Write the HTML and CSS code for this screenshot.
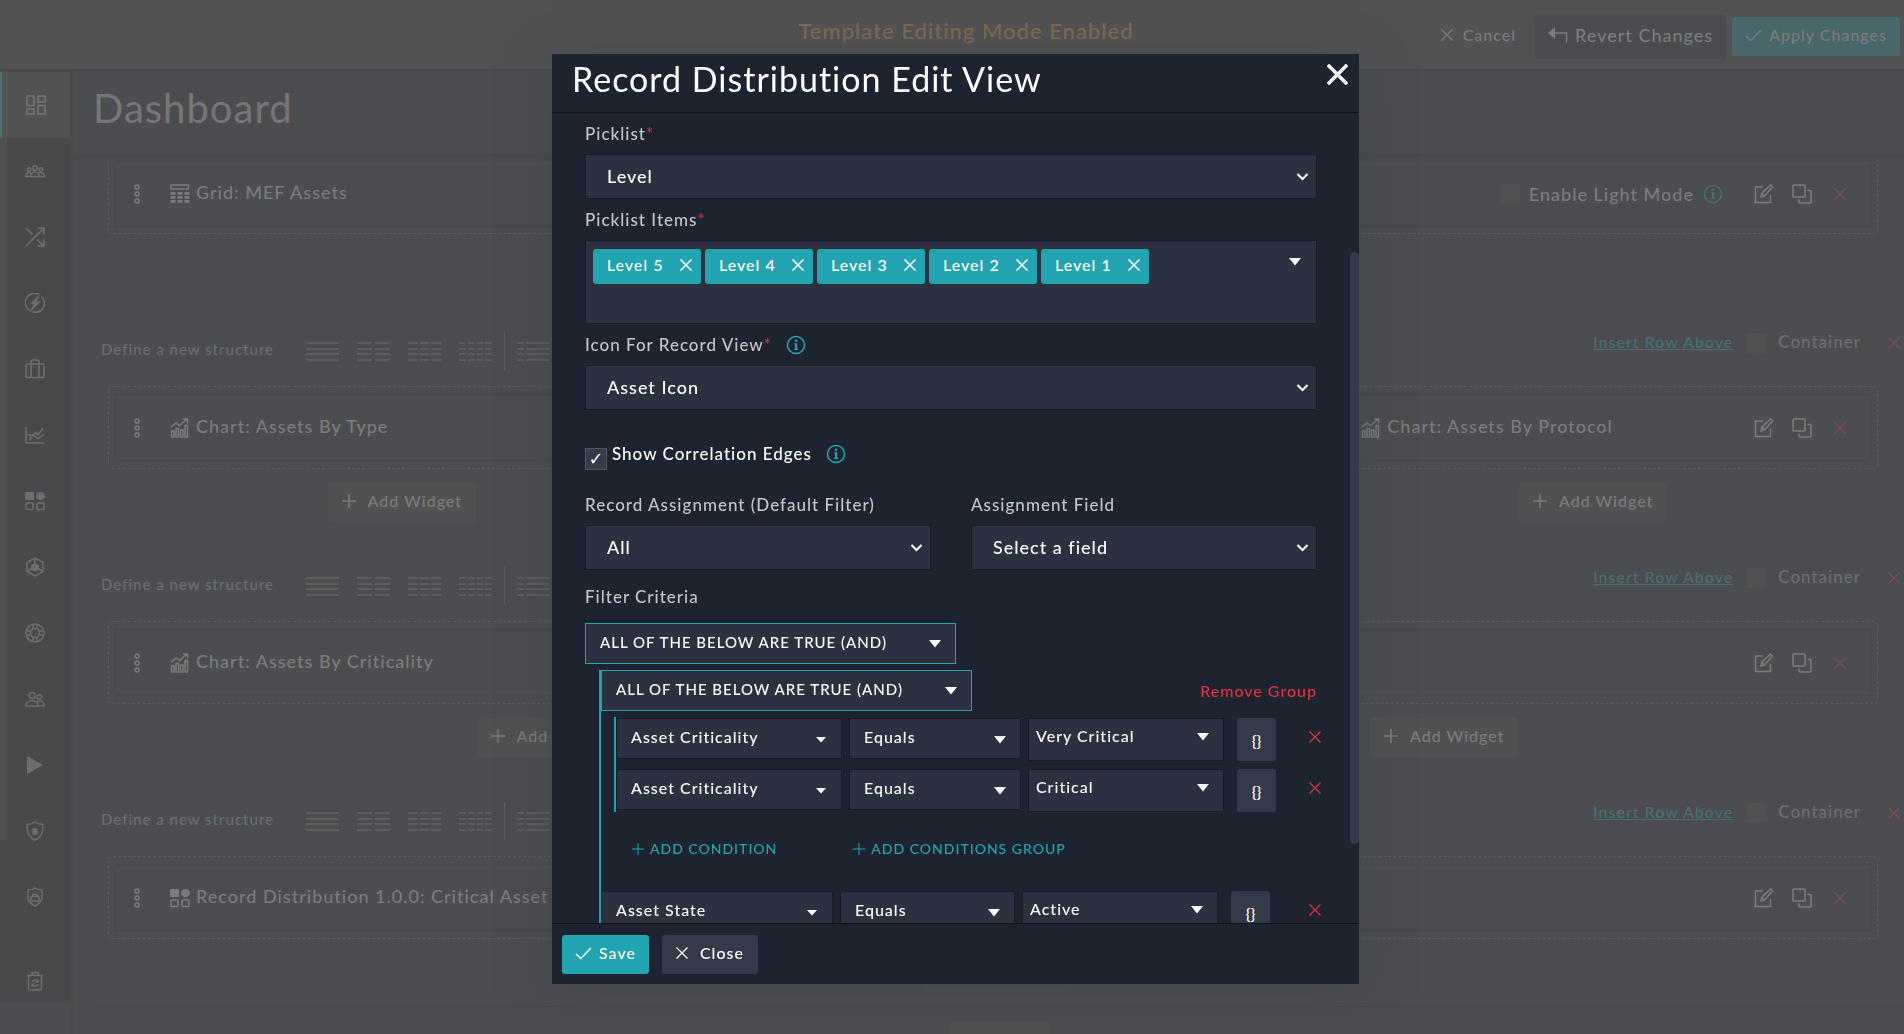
FILE: index.html
```html
<!DOCTYPE html>
<html lang="en">
<head>
<meta charset="utf-8">
<title>Dashboard</title>
<link rel="stylesheet" href="styles.css">
</head>
<body>
<svg class="sprite" aria-hidden="true">
  <symbol id="i-x" viewBox="0 0 12 12"><path d="M.500 .500l11 11M11.500 .500l-11 11"/></symbol>
  <symbol id="i-plus" viewBox="0 0 14 14"><path d="M7 0v14M0 7h14"/></symbol>
  <symbol id="i-check" viewBox="0 0 18 14"><path d="M1 7.500l5 5L17 1"/></symbol>
  <symbol id="i-undo" viewBox="0 0 20 16"><path d="M3 6h15.500v9.500"/><path class="fill" d="M7 0v12L0 6z"/></symbol>
  <symbol id="i-info" viewBox="0 0 20 20"><circle cx="10" cy="10" r="8.500"/><path class="fill" d="M8 8.300h3.200v5.700h1.200v1H7.700v-1h1.300V9.300H8z"/><circle class="fill" cx="10" cy="5.700" r="1.300"/></symbol>
  <symbol id="i-chev" viewBox="0 0 12 8"><path d="M1 1l5 5 5-5"/></symbol>
  <symbol id="i-caret" viewBox="0 0 12 8"><path class="fill" d="M0 0h12L6 7.500z"/></symbol>
  <symbol id="i-caret-s" viewBox="0 0 12 8"><path class="fill" d="M1 1h10L6 6.500z"/></symbol>
  <symbol id="i-edit" viewBox="0 0 20 20"><path d="M9 3H1.500v15.500h15V11M7 13l1-4 8.500-8 2 2L10.500 12z M8 9l2.500 3"/></symbol>
  <symbol id="i-copy" viewBox="0 0 20 20"><rect x="1" y="1" width="12" height="12" rx="1"/><path d="M15.500 6.500H18q1 0 1 1V18q0 1-1 1H8q-1 0-1-1v-2.500"/></symbol>
  <symbol id="i-drag" viewBox="0 0 6 20"><circle cx="3" cy="3" r="2"/><circle cx="3" cy="10" r="2"/><circle cx="3" cy="17" r="2"/></symbol>
  <symbol id="i-grid" viewBox="0 0 20 20"><rect x="1" y="1" width="17.500" height="4"/><path class="fill" d="M.500 8h5v2.800h-5zM7.500 8h5v2.800h-5zM14.500 8h5v2.800h-5zM.500 12h5v2.800h-5zM7.500 12h5v2.800h-5zM14.500 12h5v2.800h-5zM.500 16h5v2.800h-5zM7.500 16h5v2.800h-5zM14.500 16h5v2.800h-5z"/></symbol>
  <symbol id="i-chart" viewBox="0 0 20 20"><path d="M1 9l5-4 3.500 2.500L17 1M13 1h4.500v4.500M1.500 19v-6h2.500v6zM6 19v-8.500h2.500V19zM10.500 19v-7H13v7zM15 19V7.500h2.500V19z"/></symbol>
  <symbol id="i-dist" viewBox="0 0 20 20"><rect class="fill" x="0" y="1" width="9" height="8" rx="1"/><ellipse class="fill" cx="15.500" cy="5" rx="4.500" ry="4"/><rect x="1" y="12" width="7" height="6.500" rx="1"/><rect x="12" y="12" width="7" height="6.500" rx="1"/></symbol>
  <symbol id="i-dash" viewBox="0 0 20 20"><rect x="1" y="1" width="7" height="9.500"/><rect x="12" y="1" width="7" height="6"/><rect x="1" y="14" width="7" height="5"/><rect x="12" y="10.500" width="7" height="8.500"/></symbol>
  <symbol id="i-team" viewBox="0 0 20 20"><circle cx="10" cy="7" r="2.300"/><circle cx="4" cy="8.500" r="1.700"/><circle cx="16" cy="8.500" r="1.700"/><path d="M5.500 15.500c0-6 9-6 9 0zM5 15.500H.700c0-3.500 2-4.500 5-3.700M15 15.500h4.300c0-3.500-2-4.500-5-3.700"/></symbol>
  <symbol id="i-shuffle" viewBox="0 0 20 20"><path d="M1 19L19 1M12.500 1H19v6.500M1 1l6.500 6.500M12 12.500l6.500 6.500M12.500 19H19v-6.500"/></symbol>
  <symbol id="i-bolt" viewBox="0 0 20 20"><path d="M13.500 1.500A9 9 0 0 0 5 17.500M16.500 3.500A9 9 0 0 1 7.500 18.700"/><path class="fill" d="M16 0L5 11h4L4 20 15.500 8.500h-4z"/></symbol>
  <symbol id="i-case" viewBox="0 0 20 20"><rect x="1" y="5" width="18" height="13.500" rx="1"/><path d="M6 18V3q0-2 2-2h4q2 0 2 2v15"/></symbol>
  <symbol id="i-line" viewBox="0 0 20 20"><path d="M1 2v16h18.500M1 10h7l5 3.500 6-4M4.500 15.500l3-5 3.500-3 2 2.500L18 3"/></symbol>
  <symbol id="i-hex" viewBox="0 0 20 20"><path d="M10 1l8 4.500v9L10 19l-8-4.500v-9zM10 1v9M2 14.500l7-4M18 14.500l-7-4"/><path class="fill" d="M10 6l4 2.500v4.500l-4 1.500-4-1.500V8.500z"/></symbol>
  <symbol id="i-life" viewBox="0 0 20 20"><circle cx="10" cy="10" r="9"/><circle cx="10" cy="10" r="4.500"/><path d="M8 1.500v4.500M12 1.500v4.500M8 14v4.500M12 14v4.500M1.500 8H6M1.500 12H6M14 8h4.500M14 12h4.500"/></symbol>
  <symbol id="i-users" viewBox="0 0 20 20"><circle cx="7" cy="6.500" r="3"/><circle cx="14.500" cy="8" r="2.300"/><path d="M.800 17c0-7 12.500-7 12.500 0zM12 12.700c4-1.500 7.200 0 7.200 4.300h-6"/></symbol>
  <symbol id="i-play" viewBox="0 0 20 20"><path class="fill" d="M2 1l16 9-16 9z"/></symbol>
  <symbol id="i-shield" viewBox="0 0 20 20"><path d="M10 1c3 2 5 2.500 8 2.500 0 7-1 12.500-8 15.500-7-3-8-8.500-8-15.500 3 0 5-.500 8-2.500z"/><ellipse class="fill" cx="10" cy="10.500" rx="2.300" ry="3.500"/><path stroke-width="1" d="M7 8.500h6M6.500 11h7M7 13h6"/></symbol>
  <symbol id="i-lock" viewBox="0 0 20 20"><path d="M10 1c2 1.500 4.500 2 7 2v7c0 4-3 7-7 9-4-2-7-5-7-9V3c2.500 0 5-.500 7-2z"/><rect x="6" y="9.500" width="8" height="4.500" rx="1"/><path d="M8 9.500V7.500h4v2"/></symbol>
  <symbol id="i-trash" viewBox="0 0 20 20"><path d="M2 4.500h16M7 4V1.500h6V4M3.500 5v12q0 2 2 2h9q2 0 2-2V5M7 11c1-3 5-3 6 0M13 13c-1 3-5 3-6 0M13 8.500v2.500h-2.500M7 15.500V13h2.500"/></symbol>
  <symbol id="s-1" viewBox="0 0 33 20"><path d="M0 2h33M0 8h33M0 13h33M0 19h33"/></symbol>
  <symbol id="s-2" viewBox="0 0 33 20"><path d="M0 2h15M18 2h15M0 8h15M18 8h15M0 13h15M18 13h15M0 19h15M18 19h15"/></symbol>
  <symbol id="s-3" viewBox="0 0 33 20"><path stroke-dasharray="10 1.500" d="M0 2h33M0 8h33M0 13h33M0 19h33"/></symbol>
  <symbol id="s-4" viewBox="0 0 33 20"><path stroke-dasharray="7 1.700" d="M0 2h33M0 8h33M0 13h33M0 19h33"/></symbol>
  <symbol id="s-5" viewBox="0 0 33 20"><path d="M0 2h7M9 2h24M0 8h7M9 8h24M0 13h7M9 13h24M0 19h7M9 19h24"/></symbol>
</svg>

<div class="app">
  <header class="topbar">
    <span class="topbar-side"></span>
    <strong class="mode">Template Editing Mode Enabled</strong>
    <div class="topbar-side actions">
      <button class="btn ghost"><svg class="ic s12"><use href="#i-x"/></svg>Cancel</button>
      <button class="btn revert"><svg class="ic undo"><use href="#i-undo"/></svg>Revert Changes</button>
      <button class="btn apply"><svg class="ic check"><use href="#i-check"/></svg>Apply Changes</button>
    </div>
  </header>

  <div class="shell">
    <nav class="sidebar" aria-label="Main">
      <a class="nav active" href="#" aria-label="Dashboard"><svg class="ic s20"><use href="#i-dash"/></svg></a>
      <a class="nav" href="#" aria-label="Teams"><svg class="ic s20"><use href="#i-team"/></svg></a>
      <a class="nav" href="#" aria-label="Workflows"><svg class="ic s20"><use href="#i-shuffle"/></svg></a>
      <a class="nav" href="#" aria-label="Automation"><svg class="ic s20"><use href="#i-bolt"/></svg></a>
      <a class="nav" href="#" aria-label="Cases"><svg class="ic s20"><use href="#i-case"/></svg></a>
      <a class="nav" href="#" aria-label="Reports"><svg class="ic s20"><use href="#i-line"/></svg></a>
      <a class="nav" href="#" aria-label="Widgets"><svg class="ic s20"><use href="#i-dist"/></svg></a>
      <a class="nav" href="#" aria-label="Resources"><svg class="ic s20"><use href="#i-hex"/></svg></a>
      <a class="nav" href="#" aria-label="Support"><svg class="ic s20"><use href="#i-life"/></svg></a>
      <a class="nav" href="#" aria-label="Users"><svg class="ic s20"><use href="#i-users"/></svg></a>
      <a class="nav" href="#" aria-label="Playbooks"><svg class="ic s20"><use href="#i-play"/></svg></a>
      <a class="nav" href="#" aria-label="Threats"><svg class="ic s20"><use href="#i-shield"/></svg></a>
      <a class="nav" href="#" aria-label="Security"><svg class="ic s20"><use href="#i-lock"/></svg></a>
      <a class="nav bin" href="#" aria-label="Recycle bin"><svg class="ic s20"><use href="#i-trash"/></svg></a>
    </nav>

    <main class="main">
      <h1 class="page-title">Dashboard</h1>
      <div class="canvas">
        <section class="columns">
          <div class="column">
            <div class="drop first"><article class="widget">
              <svg class="ic drag"><use href="#i-drag"/></svg><svg class="ic s20"><use href="#i-grid"/></svg><span class="name">Grid: MEF Assets</span>
              <label class="light"><input type="checkbox" class="tick">Enable Light Mode<svg class="ic s20 teal"><use href="#i-info"/></svg></label>
              <button class="tool" aria-label="Edit"><svg class="ic s20"><use href="#i-edit"/></svg></button><button class="tool" aria-label="Copy"><svg class="ic s20"><use href="#i-copy"/></svg></button><button class="tool red" aria-label="Remove"><svg class="ic s12"><use href="#i-x"/></svg></button>
            </article></div>
            <button class="btn add"><svg class="ic s14"><use href="#i-plus"/></svg>Add Widget</button>
          </div>
        </section>

        <div class="bar">
          <div class="structure"><span>Define a new structure</span><svg class="ic lay"><use href="#s-1"/></svg><svg class="ic lay"><use href="#s-2"/></svg><svg class="ic lay"><use href="#s-3"/></svg><svg class="ic lay"><use href="#s-4"/></svg><i class="rule"></i><svg class="ic lay"><use href="#s-5"/></svg></div>
          <div class="row-tools"><a href="#">Insert Row Above</a><label class="container"><input type="checkbox" class="tick"><span>Container</span></label><button class="tool red" aria-label="Remove row"><svg class="ic s12"><use href="#i-x"/></svg></button></div>
        </div>
        <section class="columns">
          <div class="column">
            <div class="drop"><article class="widget">
              <svg class="ic drag"><use href="#i-drag"/></svg><svg class="ic s20"><use href="#i-chart"/></svg><span class="name">Chart: Assets By Type</span>
            </article></div>
            <button class="btn add"><svg class="ic s14"><use href="#i-plus"/></svg>Add Widget</button>
          </div>
          <div class="column">
            <div class="drop"><article class="widget"></article></div>
            <button class="btn add"><svg class="ic s14"><use href="#i-plus"/></svg>Add Widget</button>
          </div>
          <div class="column">
            <div class="drop"><article class="widget">
              <svg class="ic drag"><use href="#i-drag"/></svg><svg class="ic s20"><use href="#i-chart"/></svg><span class="name">Chart: Assets By Protocol</span>
              <button class="tool" aria-label="Edit"><svg class="ic s20"><use href="#i-edit"/></svg></button><button class="tool" aria-label="Copy"><svg class="ic s20"><use href="#i-copy"/></svg></button><button class="tool red" aria-label="Remove"><svg class="ic s12"><use href="#i-x"/></svg></button>
            </article></div>
            <button class="btn add"><svg class="ic s14"><use href="#i-plus"/></svg>Add Widget</button>
          </div>
        </section>

        <div class="bar">
          <div class="structure"><span>Define a new structure</span><svg class="ic lay"><use href="#s-1"/></svg><svg class="ic lay"><use href="#s-2"/></svg><svg class="ic lay"><use href="#s-3"/></svg><svg class="ic lay"><use href="#s-4"/></svg><i class="rule"></i><svg class="ic lay"><use href="#s-5"/></svg></div>
          <div class="row-tools"><a href="#">Insert Row Above</a><label class="container"><input type="checkbox" class="tick"><span>Container</span></label><button class="tool red" aria-label="Remove row"><svg class="ic s12"><use href="#i-x"/></svg></button></div>
        </div>
        <section class="columns">
          <div class="column">
            <div class="drop"><article class="widget">
              <svg class="ic drag"><use href="#i-drag"/></svg><svg class="ic s20"><use href="#i-chart"/></svg><span class="name">Chart: Assets By Criticality</span>
            </article></div>
            <button class="btn add"><svg class="ic s14"><use href="#i-plus"/></svg>Add Widget</button>
          </div>
          <div class="column">
            <div class="drop"><article class="widget">
              <span class="name"></span>
              <button class="tool" aria-label="Edit"><svg class="ic s20"><use href="#i-edit"/></svg></button><button class="tool" aria-label="Copy"><svg class="ic s20"><use href="#i-copy"/></svg></button><button class="tool red" aria-label="Remove"><svg class="ic s12"><use href="#i-x"/></svg></button>
            </article></div>
            <button class="btn add"><svg class="ic s14"><use href="#i-plus"/></svg>Add Widget</button>
          </div>
        </section>

        <div class="bar">
          <div class="structure"><span>Define a new structure</span><svg class="ic lay"><use href="#s-1"/></svg><svg class="ic lay"><use href="#s-2"/></svg><svg class="ic lay"><use href="#s-3"/></svg><svg class="ic lay"><use href="#s-4"/></svg><i class="rule"></i><svg class="ic lay"><use href="#s-5"/></svg></div>
          <div class="row-tools"><a href="#">Insert Row Above</a><label class="container"><input type="checkbox" class="tick"><span>Container</span></label><button class="tool red" aria-label="Remove row"><svg class="ic s12"><use href="#i-x"/></svg></button></div>
        </div>
        <section class="columns">
          <div class="column">
            <div class="drop"><article class="widget">
              <svg class="ic drag"><use href="#i-drag"/></svg><svg class="ic s20"><use href="#i-dist"/></svg><span class="name">Record Distribution 1.0.0: Critical Asset Distribution</span>
              <button class="tool" aria-label="Edit"><svg class="ic s20"><use href="#i-edit"/></svg></button><button class="tool" aria-label="Copy"><svg class="ic s20"><use href="#i-copy"/></svg></button><button class="tool red" aria-label="Remove"><svg class="ic s12"><use href="#i-x"/></svg></button>
            </article></div>
            <button class="btn add"><svg class="ic s14"><use href="#i-plus"/></svg>Add Widget</button>
          </div>
        </section>
        <div class="add-row"><button class="btn add">Add Row</button></div>
      </div>
    </main>
  </div>
</div>

<div class="overlay">
  <form class="modal" role="dialog" aria-labelledby="modal-title">
    <header class="modal-head">
      <h2 id="modal-title">Record Distribution Edit View</h2>
      <button type="button" class="close" aria-label="Close"><svg class="ic"><use href="#i-x"/></svg></button>
    </header>

    <div class="modal-body">
      <div class="fields">
        <label class="label" for="picklist">Picklist<b>*</b></label>
        <div class="select"><select id="picklist"><option>Level</option></select><svg class="ic chev"><use href="#i-chev"/></svg></div>

        <span class="label" id="items-label">Picklist Items<b>*</b></span>
        <div class="multi" role="group" aria-labelledby="items-label">
          <span class="tag">Level 5<button type="button" aria-label="Remove Level 5"><svg class="ic s12"><use href="#i-x"/></svg></button></span>
          <span class="tag">Level 4<button type="button" aria-label="Remove Level 4"><svg class="ic s12"><use href="#i-x"/></svg></button></span>
          <span class="tag">Level 3<button type="button" aria-label="Remove Level 3"><svg class="ic s12"><use href="#i-x"/></svg></button></span>
          <span class="tag">Level 2<button type="button" aria-label="Remove Level 2"><svg class="ic s12"><use href="#i-x"/></svg></button></span>
          <span class="tag">Level 1<button type="button" aria-label="Remove Level 1"><svg class="ic s12"><use href="#i-x"/></svg></button></span>
          <svg class="ic caret"><use href="#i-caret"/></svg>
        </div>

        <label class="label" for="icon">Icon For Record View<b>*</b><svg class="ic s20 teal"><use href="#i-info"/></svg></label>
        <div class="select"><select id="icon"><option>Asset Icon</option></select><svg class="ic chev"><use href="#i-chev"/></svg></div>

        <label class="edges"><input type="checkbox" checked class="box"><span>Show Correlation Edges</span><svg class="ic s20 teal"><use href="#i-info"/></svg></label>

        <div class="pair">
          <div>
            <label class="label" for="assign">Record Assignment (Default Filter)</label>
            <div class="select"><select id="assign"><option>All</option></select><svg class="ic chev"><use href="#i-chev"/></svg></div>
          </div>
          <div>
            <label class="label" for="field">Assignment Field</label>
            <div class="select"><select id="field"><option>Select a field</option></select><svg class="ic chev"><use href="#i-chev"/></svg></div>
          </div>
        </div>

        <label class="label criteria" for="logic">Filter Criteria</label>
        <div class="select logic"><select id="logic"><option>ALL OF THE BELOW ARE TRUE (AND)</option></select><svg class="ic caret"><use href="#i-caret"/></svg></div>

        <div class="group">
          <div class="group-head">
            <div class="select logic"><select aria-label="Group logic"><option>ALL OF THE BELOW ARE TRUE (AND)</option></select><svg class="ic caret"><use href="#i-caret"/></svg></div>
            <button type="button" class="remove">Remove Group</button>
          </div>
          <div class="group inner">
            <div class="cond">
              <div class="select small"><select aria-label="Field"><option>Asset Criticality</option></select><svg class="ic caret"><use href="#i-caret-s"/></svg></div>
              <div class="select small"><select aria-label="Operator"><option>Equals</option></select><svg class="ic caret"><use href="#i-caret"/></svg></div>
              <div class="select small value"><select aria-label="Value"><option>Very Critical</option></select><svg class="ic caret"><use href="#i-caret"/></svg></div>
              <button type="button" class="braces">{}</button>
              <button type="button" class="tool red" aria-label="Remove condition"><svg class="ic s12"><use href="#i-x"/></svg></button>
            </div>
            <div class="cond">
              <div class="select small"><select aria-label="Field"><option>Asset Criticality</option></select><svg class="ic caret"><use href="#i-caret-s"/></svg></div>
              <div class="select small"><select aria-label="Operator"><option>Equals</option></select><svg class="ic caret"><use href="#i-caret"/></svg></div>
              <div class="select small value"><select aria-label="Value"><option>Critical</option></select><svg class="ic caret"><use href="#i-caret"/></svg></div>
              <button type="button" class="braces">{}</button>
              <button type="button" class="tool red" aria-label="Remove condition"><svg class="ic s12"><use href="#i-x"/></svg></button>
            </div>
          </div>
          <div class="adders">
            <button type="button"><svg class="ic s12"><use href="#i-plus"/></svg>ADD CONDITION</button>
            <button type="button"><svg class="ic s12"><use href="#i-plus"/></svg>ADD CONDITIONS GROUP</button>
          </div>
          <div class="cond outer">
            <div class="select small"><select aria-label="Field"><option>Asset State</option></select><svg class="ic caret"><use href="#i-caret-s"/></svg></div>
            <div class="select small"><select aria-label="Operator"><option>Equals</option></select><svg class="ic caret"><use href="#i-caret"/></svg></div>
            <div class="select small value"><select aria-label="Value"><option>Active</option></select><svg class="ic caret"><use href="#i-caret"/></svg></div>
            <button type="button" class="braces">{}</button>
            <button type="button" class="tool red" aria-label="Remove condition"><svg class="ic s12"><use href="#i-x"/></svg></button>
          </div>
        </div>
      </div>
      <div class="scroll"><i></i></div>
    </div>

    <footer class="modal-foot">
      <button type="submit" class="btn save"><svg class="ic check"><use href="#i-check"/></svg>Save</button>
      <button type="button" class="btn shut"><svg class="ic s12"><use href="#i-x"/></svg>Close</button>
    </footer>
  </form>
</div>
</body>
</html>
```
FILE: styles.css
```css
* { box-sizing: border-box; }

body {
  margin: 0;
  height: 100vh;
  overflow: hidden;
  background: #4c4d50;
  color: #7b7c7d;
  font: 500 16px/20px Lato, "Liberation Sans", sans-serif;
  letter-spacing: 1px;
}

h1, h2 { margin: 0; font-weight: 400; }

button {
  border: 0;
  padding: 0;
  background: none;
  color: inherit;
  font: inherit;
  letter-spacing: inherit;
}

.sprite { position: absolute; width: 0; height: 0; }

.ic { flex: none; fill: none; stroke: currentColor; stroke-width: 1.5; }
.ic.s12 { width: 12px; height: 12px; stroke-width: 1.2; }
.ic.s14 { width: 14px; height: 14px; }
.ic.s20 { width: 20px; height: 20px; }
.ic.undo { width: 20px; height: 16px; }
.ic.check { width: 17px; height: 13px; }
.ic.drag { width: 6px; height: 20px; }
.ic.lay { width: 33px; height: 20px; }
.fill { fill: currentColor; stroke: none; }
.teal { color: #487073; }
.red { color: #7d4f50; }

/* Page behind the dialog */
.app { display: flex; flex-direction: column; height: 100vh; }

.topbar {
  display: flex;
  flex: none;
  height: 71px;
  padding: 0 4px 0 32px;
  background: #515253;
  border-bottom: 2px solid #48494a;
}
.topbar-side { flex: 1; }
.mode {
  padding-top: 17px;
  font-size: 22px;
  font-weight: 500;
  line-height: 27px;
  color: #7d6a4e;
}
.actions { display: flex; justify-content: flex-end; align-items: center; gap: 6px; padding-top: 4px; }

.btn {
  display: inline-flex;
  align-items: center;
  justify-content: center;
  height: 39px;
  padding: 0 13px 3px;
  border-radius: 3px;
}
.btn.ghost { gap: 10px; }
.btn.revert { gap: 7px; height: 44px; background: #4b4c50; font-size: 18px; }
.btn.apply { gap: 7px; background: #496768; }

.shell { display: flex; flex: 1; min-height: 0; }

.sidebar {
  display: flex;
  flex-direction: column;
  flex: none;
  width: 73px;
  padding-top: 1px;
  background: linear-gradient(#515253, #515253) 0 0 / 7px 769px no-repeat #484949;
  border-right: 3px solid #4a4b4c;
  color: #6c6f72;
}
.nav {
  display: flex;
  flex: none;
  align-items: center;
  justify-content: center;
  height: 66px;
  color: inherit;
}
.nav.active { background: #515253; border-left: 2px solid #4d6f70; color: #757779; }
.nav.bin { flex: 1; padding-top: 29px; border-bottom: 31px solid #4c4d50; }

.main { flex: 1; min-width: 0; display: flex; flex-direction: column; }
.page-title {
  flex: none;
  height: 89px;
  padding: 9px 20px;
  border-bottom: 7px solid #494a49;
  font-size: 40px;
  line-height: 56px;
  color: #757676;
}
.canvas { flex: 1; min-height: 0; overflow: hidden; }

.columns { display: flex; padding: 0 13px 0 31px; }
.column {
  display: flex;
  flex: 1;
  flex-direction: column;
  align-items: center;
  gap: 14px;
  min-width: 0;
}
.drop {
  align-self: stretch;
  height: 83px;
  margin: 0 13px 0 4px;
  padding: 7px 6px;
  border: 1px dashed #5b5c5d;
  border-radius: 5px;
}
.drop.first { height: 74px; padding-top: 0; border-top: 0; border-radius: 0 0 5px 5px; }
.widget {
  display: flex;
  align-items: center;
  height: 67px;
  padding: 0 20px 0 18px;
  border: 1px solid #474849;
  font-size: 18px;
}
.drag { margin-right: 30px; }
.name { flex: 1; margin-left: 6px; padding-bottom: 4px; white-space: nowrap; }
.light { display: flex; align-items: center; gap: 9px; margin-right: 31px; }
.tick { appearance: none; width: 20px; height: 20px; margin: 0; background: #515253; }
.tool { display: flex; flex: none; align-items: center; justify-content: center; width: 20px; height: 20px; }
.tool + .tool { margin-left: 18px; }
.btn.add { gap: 12px; padding: 0 14px 3px; background: #505152; }

.bar { display: flex; justify-content: space-between; height: 99px; padding: 45px 0 14px 28px; }
.structure { display: flex; align-items: center; gap: 18px; color: #6b6d72; align-self: flex-end; font-size: 15px; height: 42px; }
.structure span { margin-right: 14px; padding-bottom: 4px; }
.rule { width: 1px; height: 38px; background: #5c5d5e; margin: 0 -6px; }
.lay { color: #626364; }
.row-tools { display: flex; align-items: center; height: 22px; gap: 14px; }
.row-tools a { padding-bottom: 2px; color: #487073; }
.container { display: flex; align-items: center; gap: 11px; margin-right: 9px; color: #6b6d72; font-size: 17px; }
.container span { padding-bottom: 2px; }
.add-row {
  margin: 14px 0 0 22px;
  padding-top: 14px;
  border-top: 1px solid #484949;
  text-align: center;
}

/* Dialog */
.overlay {
  position: fixed;
  inset: 0;
  display: flex;
  justify-content: center;
  align-items: flex-start;
  padding: 54px 0 50px 7px;
}
.modal {
  display: flex;
  flex-direction: column;
  width: 807px;
  height: 100%;
  background: #1d2430;
  color: #fff;
  box-shadow: 0 8px 40px rgba(60, 68, 72, .5);
}
.modal-head {
  display: flex;
  flex: none;
  justify-content: space-between;
  height: 59px;
  padding: 0 11px 0 20px;
  border-bottom: 1px solid #0e131b;
}
.modal-head h2 { font-size: 34px; line-height: 49px; }
.close { height: 42px; padding-top: 3px; }
.close .ic { width: 21px; height: 21px; stroke-width: 2; }

.modal-body { display: flex; flex: 1; min-height: 0; overflow: hidden; }
.fields { flex: 1; padding: 0 33px; }
.scroll { flex: none; width: 9px; padding: 139px 0 79px; }
.scroll i { display: block; height: 100%; border-radius: 5px; background: #343b49; }

.label { display: flex; align-items: center; height: 41px; padding-top: 1px; color: #c3c5c8; }
.label, .edges { font-size: 17px; }
.label b { color: #dc3340; font-weight: 400; }
.label .ic { margin-left: 14px; }
.fields .teal { color: #22a5b0; }

.select { display: grid; }
.select select, .select .ic { grid-area: 1 / 1; }
.select select {
  appearance: none;
  width: 100%;
  height: 45px;
  padding: 0 40px 2px 21px;
  border: 1px solid #171c26;
  border-radius: 0;
  background: #2b313f;
  color: #fff;
  font: 500 18px/20px Lato, "Liberation Sans", sans-serif;
  letter-spacing: 1px;
}
.select .ic { align-self: center; justify-self: end; pointer-events: none; }
.chev { width: 13px; height: 8px; margin-right: 8px; stroke-width: 2; }
.caret { width: 12px; height: 8px; margin-right: 15px; }

.multi {
  display: flex;
  align-items: flex-start;
  gap: 4px;
  height: 84px;
  padding: 8px 0 0 7px;
  border: 1px solid #171c26;
  background: #2b313f;
}
.multi .caret { margin: 9px 15px 0 auto; }
.tag {
  display: flex;
  align-items: center;
  justify-content: space-between;
  width: 108px;
  height: 35px;
  padding: 0 9px 3px 14px;
  border-radius: 3px;
  background: #22a5b0;
}
.tag .ic { display: block; stroke-width: 1.5; }

.edges { display: flex; align-items: center; gap: 5px; height: 74px; padding-top: 14px; }
.edges .ic { margin-left: 9px; }
.box {
  appearance: none;
  display: grid;
  place-items: center;
  width: 22px;
  height: 22px;
  margin: 9px 0 0;
  border: 1px solid #54565a;
  background: #343b4a;
}
.box::before {
  content: "\2713";
  color: #fff;
  font: bold 18px/18px "DejaVu Sans", sans-serif;
  letter-spacing: 0;
}
.pair { display: grid; grid-template-columns: 1fr 1fr; gap: 40px; }
.criteria { height: 53px; padding: 0; }

.logic { width: 371px; }
.logic select { height: 41px; padding: 0 40px 4px 14px; border-color: #22a5b0; font-size: 15px; }
.group { margin: 6px 0 0 14px; border-left: 2px solid #22a5b0; }
.group-head { display: flex; align-items: center; justify-content: space-between; }
.remove { color: #dc3340; }
.inner { margin-left: 13px; }
.cond { display: grid; grid-template-columns: 226fr 172fr 196fr 45px 34px; column-gap: 7px; height: 51px; padding-top: 1px; }
.inner .cond:last-child { height: 44px; }
.cond.outer { grid-template-columns: 232fr 175fr 196fr 45px 40px; }
.cond .select { align-items: start; }
.small select { height: 41px; padding: 0 30px 3px 14px; font-size: 16px; }
.small .ic { align-self: start; margin-top: 18px; }
.value select { height: 43px; padding: 0 30px 7px 7px; }
.value .ic { margin-top: 15px; }
.braces { width: 39px; height: 43px; margin-left: 6px; border-radius: 3px; background: #343a48; letter-spacing: 0; }
.cond .tool { justify-self: end; margin: 9px -8px 0 0; }
.cond .red { color: #dc3340; }
.adders { display: flex; gap: 76px; height: 78px; padding: 0 0 4px 31px; color: #22a5b0; font-size: 14px; }
.adders button { display: flex; align-items: center; gap: 6px; }

.modal-foot {
  display: flex;
  flex: none;
  gap: 13px;
  height: 61px;
  padding: 11px 10px;
  border-top: 1px solid #0e131b;
}
.save { gap: 7px; background: #22a5b0; }
.shut { gap: 12px; padding: 0 14px 3px; background: #343a48; }
```
